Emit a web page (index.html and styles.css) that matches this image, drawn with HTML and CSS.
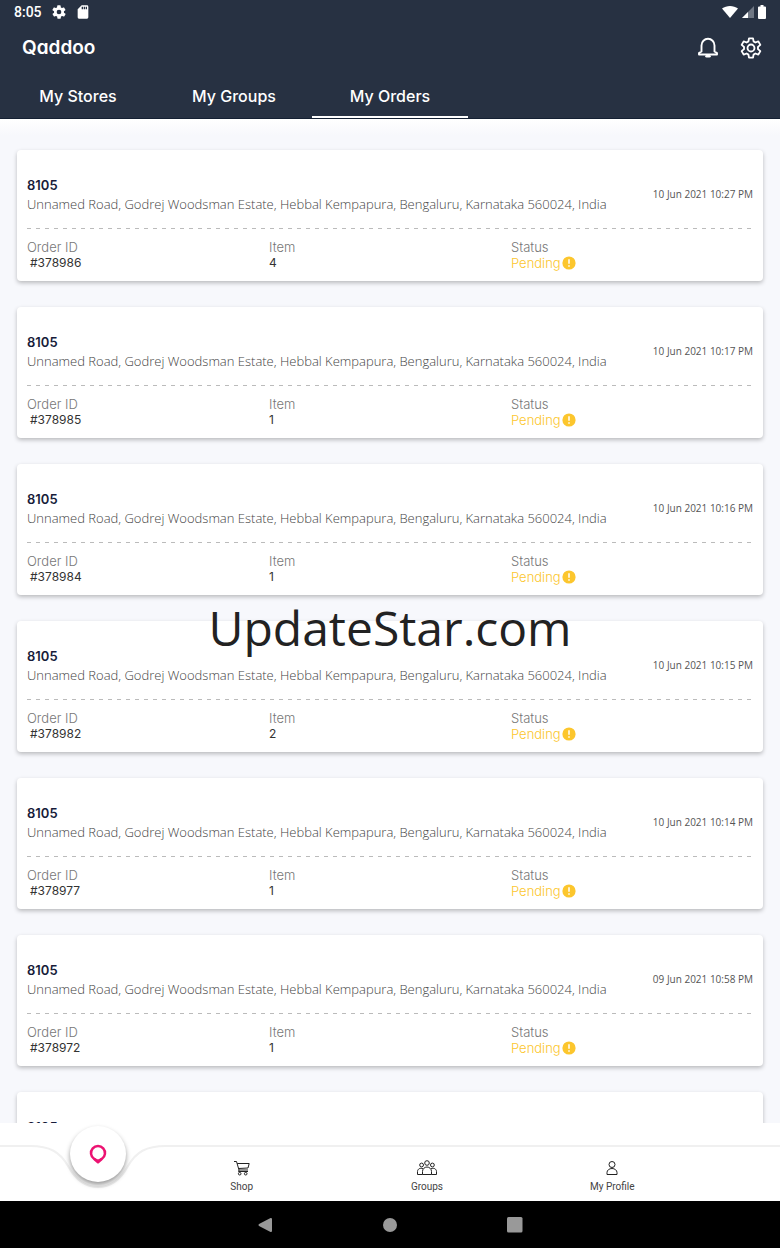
FILE: index.html
```
<!DOCTYPE html>
<html lang="en">
<head>
    <meta charset="UTF-8">
    <meta name="viewport" content="width=device-width, initial-scale=1.0">
    <title>Qaddoo - My Orders</title>
    <link rel="stylesheet" href="styles.css">
</head>
<body>
    <!-- Shared icons -->
    <svg class="sprite" aria-hidden="true">
        <symbol id="alert" viewBox="0 0 14 14">
            <circle cx="7" cy="7" r="6.6" fill="#fcc62d"/>
            <path d="M7 3.3v4.4M7 9.3v1.5" stroke="#fff" stroke-width="1.5"/>
        </symbol>
    </svg>

    <header class="header">
        <div class="status-bar">
            <span class="time">8:05</span>
            <svg width="16" height="16" viewBox="0 0 24 24" fill="#fff"><path d="M19.4 13a7.800 7.800 0 0 0 0-2l2.100-1.600a.5.5 0 0 0 .1-.7l-2-3.400a.5.5 0 0 0-.6-.2l-2.500 1a7.300 7.300 0 0 0-1.700-1l-.4-2.600a.5.5 0 0 0-.5-.5h-4a.5.5 0 0 0-.5.500l-.4 2.600a7.700 7.700 0 0 0-1.700 1l-2.500-1a.5.5 0 0 0-.6.2l-2 3.400a.5.5 0 0 0 .1.700L4.600 11a8 8 0 0 0 0 2l-2.100 1.600a.5.5 0 0 0-.1.700l2 3.400c.1.200.4.300.6.200l2.500-1a7.300 7.300 0 0 0 1.700 1l.4 2.600c0 .3.200.5.500.5h4c.3 0 .5-.2.500-.5l.4-2.600a7.700 7.700 0 0 0 1.700-1l2.500 1c.2.100.5 0 .6-.2l2-3.400a.5.5 0 0 0-.1-.7zM12 15.500a3.500 3.500 0 1 1 0-7 3.500 3.500 0 0 1 0 7z"/></svg>
            <svg width="16" height="16" viewBox="0 0 24 24" fill="#fff"><path d="M18 2h-8L4 8v12a2 2 0 0 0 2 2h12a2 2 0 0 0 2-2V4a2 2 0 0 0-2-2zm-6 6h-2V4h2zm3 0h-2V4h2zm3 0h-2V4h2z"/></svg>
            <span class="signals">
                <svg width="16" height="14" viewBox="0 0 16 14" fill="#fff"><path d="M0 3.500C4.500 0 11.500 0 16 3.500L8 13z"/></svg>
                <svg width="12" height="14" viewBox="0 0 12 14"><path d="M12 1v12H0z" fill="#6f7784"/><path d="M6 7v6H0z" fill="#fff"/></svg>
                <svg width="8" height="14" viewBox="0 0 8 14" fill="#fff"><path d="M2.500 0h3v1.500H7a1 1 0 0 1 1 1V13a1 1 0 0 1-1 1H1a1 1 0 0 1-1-1V2.500a1 1 0 0 1 1-1h1.500z"/></svg>
            </span>
        </div>
        <div class="title-bar">
            <a class="logo" href="#">Qaddoo</a>
            <button class="icon-btn" aria-label="Notifications">
                <svg width="22" height="22" viewBox="0 0 22 22" fill="none" stroke="#fff" stroke-width="1.900" stroke-linejoin="round"><path d="M4.500 14.500V8.500a6.500 6.700 0 0 1 13 0v6l2.500 1.500V17.500H2v-1.500z"/><path d="M9.500 19.300h3" stroke-width="2.500" stroke-linecap="round"/></svg>
            </button>
            <button class="icon-btn" aria-label="Settings">
                <svg width="22" height="22" viewBox="0 0 24 24" fill="none" stroke="#fff" stroke-width="2" stroke-linejoin="round"><circle cx="12" cy="12" r="3.800"/><path d="M9.800 1.500h4.400l.6 3.300 2 1.200 3.200-1.200 2.200 3.800-2.600 2.200v2.400l2.600 2.200-2.200 3.800-3.200-1.200-2 1.200-.6 3.300H9.800l-.6-3.300-2-1.200L4 19.200l-2.200-3.800 2.600-2.200v-2.400L1.800 8.600 4 4.800 7.200 6l2-1.200z"/></svg>
            </button>
        </div>
        <nav class="tabs">
            <a class="tab" href="#">My Stores</a>
            <a class="tab" href="#">My Groups</a>
            <a class="tab active" href="#">My Orders</a>
        </nav>
    </header>

    <main class="orders">
        <article class="order">
            <div class="order-top">
                <div>
                    <h2>8105</h2>
                    <p class="address">Unnamed Road, Godrej Woodsman Estate, Hebbal Kempapura, Bengaluru, Karnataka 560024, India</p>
                </div>
                <time>10 Jun 2021 10:27 PM</time>
            </div>
            <dl class="details">
                <div><dt>Order ID</dt><dd class="order-id">#378986</dd></div>
                <div><dt>Item</dt><dd>4</dd></div>
                <div><dt>Status</dt><dd class="pending">Pending<svg class="alert"><use href="#alert"/></svg></dd></div>
            </dl>
        </article>

        <article class="order">
            <div class="order-top">
                <div>
                    <h2>8105</h2>
                    <p class="address">Unnamed Road, Godrej Woodsman Estate, Hebbal Kempapura, Bengaluru, Karnataka 560024, India</p>
                </div>
                <time>10 Jun 2021 10:17 PM</time>
            </div>
            <dl class="details">
                <div><dt>Order ID</dt><dd class="order-id">#378985</dd></div>
                <div><dt>Item</dt><dd>1</dd></div>
                <div><dt>Status</dt><dd class="pending">Pending<svg class="alert"><use href="#alert"/></svg></dd></div>
            </dl>
        </article>

        <article class="order">
            <div class="order-top">
                <div>
                    <h2>8105</h2>
                    <p class="address">Unnamed Road, Godrej Woodsman Estate, Hebbal Kempapura, Bengaluru, Karnataka 560024, India</p>
                </div>
                <time>10 Jun 2021 10:16 PM</time>
            </div>
            <dl class="details">
                <div><dt>Order ID</dt><dd class="order-id">#378984</dd></div>
                <div><dt>Item</dt><dd>1</dd></div>
                <div><dt>Status</dt><dd class="pending">Pending<svg class="alert"><use href="#alert"/></svg></dd></div>
            </dl>
        </article>

        <article class="order">
            <div class="order-top">
                <div>
                    <h2>8105</h2>
                    <p class="address">Unnamed Road, Godrej Woodsman Estate, Hebbal Kempapura, Bengaluru, Karnataka 560024, India</p>
                </div>
                <time>10 Jun 2021 10:15 PM</time>
            </div>
            <dl class="details">
                <div><dt>Order ID</dt><dd class="order-id">#378982</dd></div>
                <div><dt>Item</dt><dd>2</dd></div>
                <div><dt>Status</dt><dd class="pending">Pending<svg class="alert"><use href="#alert"/></svg></dd></div>
            </dl>
        </article>

        <article class="order">
            <div class="order-top">
                <div>
                    <h2>8105</h2>
                    <p class="address">Unnamed Road, Godrej Woodsman Estate, Hebbal Kempapura, Bengaluru, Karnataka 560024, India</p>
                </div>
                <time>10 Jun 2021 10:14 PM</time>
            </div>
            <dl class="details">
                <div><dt>Order ID</dt><dd class="order-id">#378977</dd></div>
                <div><dt>Item</dt><dd>1</dd></div>
                <div><dt>Status</dt><dd class="pending">Pending<svg class="alert"><use href="#alert"/></svg></dd></div>
            </dl>
        </article>

        <article class="order">
            <div class="order-top">
                <div>
                    <h2>8105</h2>
                    <p class="address">Unnamed Road, Godrej Woodsman Estate, Hebbal Kempapura, Bengaluru, Karnataka 560024, India</p>
                </div>
                <time>09 Jun 2021 10:58 PM</time>
            </div>
            <dl class="details">
                <div><dt>Order ID</dt><dd class="order-id">#378972</dd></div>
                <div><dt>Item</dt><dd>1</dd></div>
                <div><dt>Status</dt><dd class="pending">Pending<svg class="alert"><use href="#alert"/></svg></dd></div>
            </dl>
        </article>

        <article class="order">
            <div class="order-top">
                <div>
                    <h2>8105</h2>
                    <p class="address">&nbsp;</p>
                </div>
            </div>
        </article>
    </main>

    <nav class="bottom-nav">
        <svg class="wave" aria-hidden="true">
            <path d="M-5 23H30C50 23 60 29 68 43C75 56 84 64 98 64S121 56 128 43C136 29 146 23 166 23H5000" fill="none" stroke="#f0f0f0" stroke-width="2"/>
        </svg>
        <div class="home">
            <button class="home-btn" aria-label="Home">
                <svg width="18" height="20" viewBox="0 0 18 20" fill="none" stroke="#ec1372" stroke-width="2.500" stroke-linejoin="round"><path d="M5 14.700A7 7 0 1 1 13 14.700L9 18.300z"/><path d="M5.500 15l3.500 1.700 3.500-1.700" stroke-width="2"/></svg>
            </button>
        </div>
        <a class="nav-item" href="#">
            <svg width="16" height="16" viewBox="0 0 16 16" fill="none" stroke="#222"><path d="M0 1.500h2.500L5 10h9M3.200 3.500h12L14 8l-9.500.5M5 10l-.5 1.500H14"/><circle cx="5.700" cy="13.700" r="1.300"/><circle cx="11.700" cy="13.700" r="1.300"/></svg>
            Shop
        </a>
        <a class="nav-item" href="#">
            <svg width="20" height="16" viewBox="0 0 20 16" fill="none" stroke="#222"><circle cx="10" cy="3" r="2.300"/><circle cx="4.600" cy="5" r="1.900"/><circle cx="15.400" cy="5" r="1.900"/><path d="M5.500 14.500v-3a4.500 4.500 0 0 1 9 0v3zM5.500 14.500h-5v-3c0-2.500 3-4.200 5.500-2.700M14.500 14.500h5v-3c0-2.500-3-4.200-5.500-2.700"/></svg>
            Groups
        </a>
        <a class="nav-item" href="#">
            <svg width="14" height="16" viewBox="0 0 14 16" fill="none" stroke="#222"><circle cx="7" cy="4.500" r="3"/><path d="M2 14.500v-2a5 4 0 0 1 10 0v2z"/></svg>
            My Profile
        </a>
    </nav>

    <footer class="system-bar">
        <button aria-label="Back"><svg width="16" height="18" viewBox="0 0 16 18"><path d="M14 3v12L2.500 9z" fill="#999" stroke="#999" stroke-width="2" stroke-linejoin="round"/></svg></button>
        <button aria-label="Home screen"><svg width="16" height="18" viewBox="0 0 16 18"><circle cx="8" cy="9" r="7" fill="#999"/></svg></button>
        <button aria-label="Recent apps"><svg width="16" height="18" viewBox="0 0 16 18"><rect y="1" width="15.500" height="15.500" rx="1.500" fill="#999"/></svg></button>
    </footer>

    <div class="watermark">UpdateStar.com</div>
</body>
</html>
```

FILE: styles.css
```
* {
    box-sizing: border-box;
}
body {
    margin: 0;
    height: 100vh;
    display: flex;
    flex-direction: column;
    overflow: hidden;
    background: #f7f8fc;
    font-family: Inter, "Open Sans", sans-serif;
    font-size: 12px;
    line-height: 16px;
    color: #333;
}
a {
    text-decoration: none;
}
button {
    border: 0;
    padding: 0;
    background: none;
    cursor: pointer;
}
svg {
    display: block;
}
.sprite {
    position: absolute;
    width: 0;
    height: 0;
}

/* Header */
.header {
    flex: none;
    background: #273142;
    color: #fff;
    border-bottom: 1px solid #142033;
}
.status-bar {
    display: flex;
    align-items: center;
    gap: 8px;
    height: 24px;
    padding: 0 14px;
    font-family: Roboto, sans-serif;
}
.time {
    width: 29px;
    font-size: 14px;
    font-weight: 500;
}
.signals {
    display: flex;
    gap: 4px;
    margin-left: auto;
}
.title-bar {
    display: flex;
    align-items: center;
    gap: 21px;
    height: 48px;
    padding: 0 18px 0 22px;
}
.logo {
    margin-right: auto;
    font-size: 19px;
    font-weight: 600;
    line-height: 24px;
    font-feature-settings: "cv11";
    color: #fff;
}
.tabs {
    display: flex;
    height: 46px;
}
.tab {
    flex: 0 0 20%;
    padding-top: 12px;
    border-bottom: 2px solid transparent;
    text-align: center;
    font-size: 16px;
    font-weight: 500;
    line-height: 24px;
    color: #fff;
}
.tab.active {
    border-bottom-color: #fff;
}

/* Order list */
.orders {
    flex: 1;
    min-height: 0;
    overflow: hidden;
    padding: 31px 17px 0;
    background: linear-gradient(#fff, #f7f8fc 16px);
}
.order {
    margin-bottom: 26px;
    padding: 0 10px;
    height: 131px;
    background: #fff;
    border-radius: 4px;
    box-shadow: 0 2px 4px rgba(0, 0, 0, 0.25);
}
.order-top {
    display: flex;
    justify-content: space-between;
    align-items: center;
    height: 78px;
    padding-top: 9px;
}
.order h2 {
    margin: 0;
    font-size: 13px;
    font-weight: 600;
    line-height: 20px;
    color: #171c3a;
}
.address {
    margin: 0;
    font-family: "Open Sans", sans-serif;
    font-size: 13px;
    font-weight: 300;
    line-height: 18px;
    color: #444;
}
.order time {
    font-family: "Open Sans", sans-serif;
    font-size: 10px;
    color: #555;
    white-space: nowrap;
}
.details {
    display: grid;
    grid-template-columns: repeat(3, 1fr);
    margin: 0;
    padding-top: 11px;
    /* dashed divider */
    background: repeating-linear-gradient(90deg, #bbb 0 4px, transparent 4px 9px) top / 100% 1px no-repeat;
}
.details dt {
    font-size: 13px;
    font-weight: 300;
    color: #777;
}
.details dd {
    margin: 0;
    color: #333;
}
.details .order-id {
    padding-left: 3px;
}
.details .pending {
    display: flex;
    align-items: center;
    gap: 1px;
    font-size: 13px;
    font-weight: 300;
    color: #fcc62d;
}
.alert {
    width: 14px;
    height: 14px;
}

/* Bottom menu */
.bottom-nav {
    position: relative;
    flex: none;
    display: grid;
    grid-template-columns: 149px repeat(3, 1fr);
    height: 78px;
    padding-right: 75px;
    background: #fff;
}
.wave {
    position: absolute;
    left: 0;
    top: 0;
    width: 100%;
    height: 100%;
}
.home {
    position: relative;
    padding: 3px 0 0 70px;
}
.home-btn {
    display: flex;
    align-items: center;
    justify-content: center;
    width: 56px;
    height: 56px;
    border-radius: 50%;
    background: #fff;
    box-shadow: 0 3px 5px rgba(0, 0, 0, 0.4);
}
.nav-item {
    position: relative;
    display: flex;
    flex-direction: column;
    align-items: center;
    gap: 3px;
    padding-top: 37px;
    font-family: Roboto, sans-serif;
    font-size: 10px;
    color: #444;
}

/* Android buttons */
.system-bar {
    flex: none;
    display: flex;
    align-items: center;
    justify-content: center;
    gap: 109px;
    height: 47px;
    background: #000;
}

.watermark {
    position: absolute;
    left: 0;
    right: 0;
    top: 50%;
    margin-top: -28px;
    text-align: center;
    font-family: "Open Sans", sans-serif;
    font-size: 48px;
    line-height: 64px;
    color: #222;
    pointer-events: none;
}
```
